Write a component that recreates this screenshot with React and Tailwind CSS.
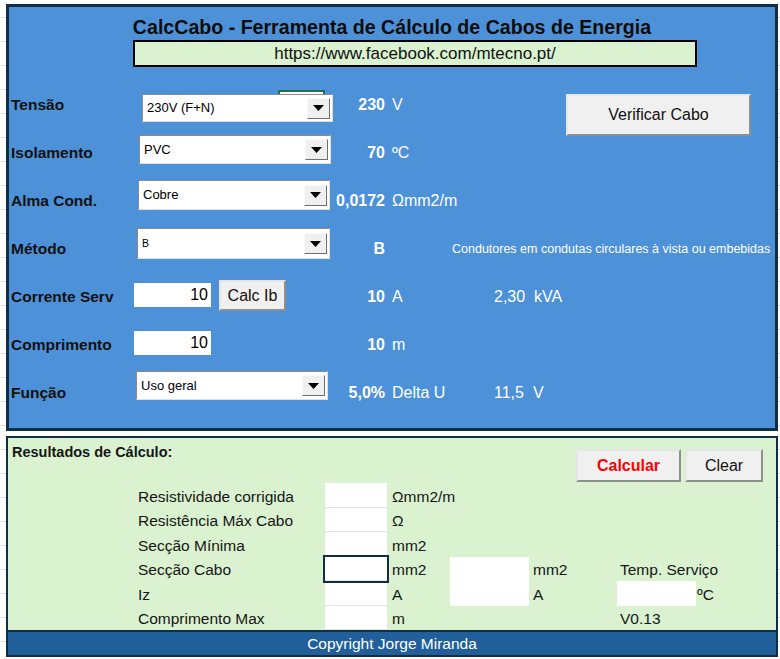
import React from "react";

const Arrow = () => (
  <svg width="11" height="6" viewBox="0 0 11 6">
    <path d="M0 0h11L5.5 6z" fill="#000" />
  </svg>
);

const Select = ({ value, small, className = "" }) => (
  <div
    className={`relative z-10 flex items-center border border-t-[#8a8a8a] border-l-[#8a8a8a] border-r-[#dedede] border-b-[#dedede] bg-white pl-[4px] pr-[2px] ${className}`}
  >
    <span className={`flex-1 text-black ${small ? "text-[10.5px]" : "text-[13px]"}`}>{value}</span>
    <div className="flex h-[21px] w-[23px] items-center justify-center border border-t-[#fafafa] border-l-[#fafafa] border-r-[#6e6e6e] border-b-[#6e6e6e] bg-[#f0f0f0]">
      <Arrow />
    </div>
  </div>
);

const XlButton = ({ children, className = "" }) => (
  <button
    className={`flex items-center justify-center border-2 border-t-[#e6e6e6] border-l-[#e6e6e6] border-r-[#8f8f8f] border-b-[#8f8f8f] bg-[#f0f0f0] text-[16px] ${className}`}
  >
    {children}
  </button>
);

const NumInput = ({ value, className = "" }) => (
  <div className={`flex h-[24px] w-[77px] items-center justify-end bg-white pr-[3px] text-[16px] text-black ${className}`}>
    {value}
  </div>
);

const Row = ({ label, control, value, unit, children, note }) => (
  <div className="relative flex h-[48px] items-center">
    <div className="w-[125px] flex-none pl-[2px] text-[15.5px] font-bold text-[#111]">{label}</div>
    <div className="flex w-[199px] flex-none items-center">{control}</div>
    <div className="w-[52px] flex-none text-right text-[16px] font-bold text-white">{value}</div>
    {note ? (
      <div className="flex-none whitespace-nowrap pl-[67px] text-[12.5px] text-white">{note}</div>
    ) : (
      <div className="w-[109px] flex-none whitespace-nowrap pl-[7px] text-[16px] text-white">{unit}</div>
    )}
    {children}
  </div>
);

const results = [
  { label: "Resistividade corrigida", unit: "Ωmm2/m" },
  { label: "Resistência Máx Cabo", unit: "Ω" },
  { label: "Secção Mínima", unit: "mm2" },
  { label: "Secção Cabo", unit: "mm2", ring: true, cell2: true, unit2: "mm2", note: "Temp. Serviço" },
  { label: "Iz", unit: "A", cell2: true, unit2: "A", cell3: true, unit3: "ºC" },
  { label: "Comprimento Max", unit: "m", note: "V0.13" },
];

export default function App() {
  return (
    <div className="h-[659px] w-[780px] overflow-hidden bg-white bg-[repeating-linear-gradient(to_bottom,transparent_0px,transparent_17px,#e1e1e1_17px,#e1e1e1_18px,transparent_18px,transparent_24px)] pl-[6px] pt-[4px] font-['Liberation_Sans',Arial,sans-serif]">
      {/* Input panel */}
      <div className="h-[427px] w-[772px] border-[3px] border-[#0e2f44] bg-[#4d91d8]">
        <h1 className="mt-[8px] h-[24px] text-center text-[19.6px] font-bold leading-[24px] text-[#0d0d0d]">
          CalcCabo - Ferramenta de Cálculo de Cabos de Energia
        </h1>
        <div className="ml-[124px] mt-[1px] h-[27px] w-[564px] border-2 border-black bg-[#daf2d0] text-center text-[17px] leading-[23px] text-[#111]">
          https://www.facebook.com/mtecno.pt/
        </div>

        <div className="mt-[14px]">
          <Row
            label="Tensão"
            value="230"
            unit="V"
            control={
              <>
                <div className="absolute left-[269px] top-[9px] h-[20px] w-[47px] border-2 border-[#217346] bg-white" />
                <Select value="230V (F+N)" className="ml-[8px] mt-[6px] h-[28px] w-[191px]" />
              </>
            }
          >
            <XlButton className="ml-[72px] mt-[13px] h-[42px] w-[185px] self-start text-[#111]">Verificar Cabo</XlButton>
          </Row>
          <Row
            label="Isolamento"
            value="70"
            unit="ºC"
            control={<Select value="PVC" className="mb-[7px] ml-[5px] h-[29px] w-[192px]" />}
          />
          <Row
            label="Alma Cond."
            value="0,0172"
            unit="Ωmm2/m"
            control={<Select value="Cobre" className="mb-[12px] ml-[4px] h-[30px] w-[192px]" />}
          />
          <Row
            label="Método"
            value="B"
            note="Condutores em condutas circulares à vista ou embebidas"
            control={<Select value="B" small className="mb-[11px] ml-[3px] h-[31px] w-[193px]" />}
          />
          <Row
            label="Corrente Serv"
            value="10"
            unit="A"
            control={
              <>
                <NumInput value="10" className="mb-[4px]" />
                <XlButton className="mb-[3px] ml-[8px] h-[31px] w-[67px] text-[#111]">Calc Ib</XlButton>
              </>
            }
          >
            <div className="w-[40px] flex-none text-[16px] text-white">2,30</div>
            <div className="text-[16px] text-white">kVA</div>
          </Row>
          <Row label="Comprimento" value="10" unit="m" control={<NumInput value="10" className="mb-[4px]" />} />
          <Row
            label="Função"
            value="5,0%"
            unit="Delta U"
            control={<Select value="Uso geral" className="mb-[15px] ml-[2px] h-[29px] w-[192px]" />}
          >
            <div className="w-[39px] flex-none text-[16px] text-white">11,5</div>
            <div className="text-[16px] text-white">V</div>
          </Row>
        </div>
      </div>

      {/* Results panel */}
      <div className="mt-[5px] w-[772px] border-2 border-[#0e2f44] bg-[#daf2d0] text-[#161616]">
        <div className="flex h-[45px] items-start justify-between">
          <div className="pl-[4px] pt-[4px] text-[14.5px] font-bold leading-[20px]">Resultados de Cálculo:</div>
          <div className="mr-[13px] mt-[11px] flex gap-[4px]">
            <XlButton className="h-[33px] w-[105px] font-bold text-[#ff0000]">Calcular</XlButton>
            <XlButton className="h-[33px] w-[78px] text-[#111]">Clear</XlButton>
          </div>
        </div>

        <div>
          {results.map((r) => (
            <div key={r.label} className="flex h-[24.5px] items-stretch text-[15.5px]">
              <div className="w-[130px] flex-none" />
              <div className="flex w-[187px] flex-none items-center pt-[2px]">{r.label}</div>
              <div
                className={`w-[62px] flex-none border-b border-[#e4e4e4] bg-white ${r.ring ? "relative z-10 ring-2 ring-[#0e2f44]" : ""}`}
              />
              <div className="flex w-[63px] flex-none items-center pl-[5px] pt-[2px]">{r.unit}</div>
              <div className={`w-[79px] flex-none ${r.cell2 ? "bg-white" : ""}`} />
              <div className="flex w-[88px] flex-none items-center pl-[4px] pt-[2px]">{r.unit2}</div>
              <div className={`flex w-[79px] flex-none items-center whitespace-nowrap pl-[3px] pt-[2px] ${r.cell3 ? "bg-white" : ""}`}>
                {r.note}
              </div>
              <div className="flex items-center pl-[1px] pt-[2px]">{r.unit3}</div>
            </div>
          ))}
        </div>

        <div className="h-[25px] border-t-2 border-[#0e2f44] bg-[#215f9a] text-center text-[15.5px] leading-[23px] text-white">
          Copyright Jorge Miranda
        </div>
      </div>
    </div>
  );
}
